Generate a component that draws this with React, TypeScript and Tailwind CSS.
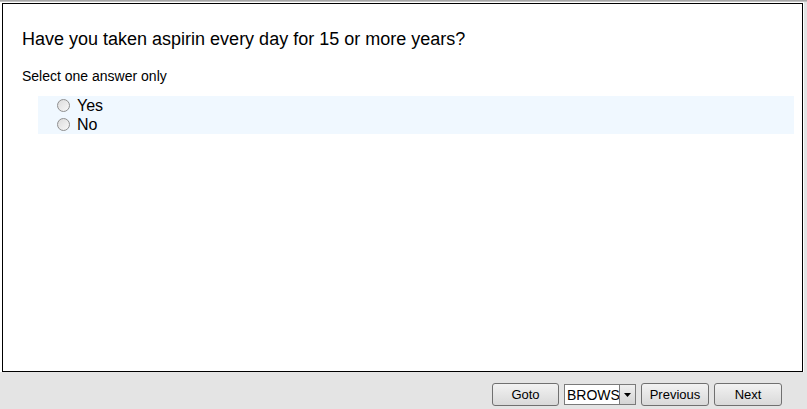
import React from "react";

function Btn({ label, w }: { label: string; w: string }) {
  return (
    <button
      className={`${w} h-[23px] rounded-[3px] border border-[#707070] bg-gradient-to-b from-[#f2f2f2] to-[#d9d9d9] text-[13px] text-black leading-none flex items-center justify-center`}
      style={{ fontFamily: '"Liberation Sans", Arial, sans-serif' }}
    >
      {label}
    </button>
  );
}

function Radio() {
  return (
    <span className="w-[13px] h-[13px] rounded-full border border-[#8f8f8f] bg-gradient-to-br from-[#dcdcdc] to-[#f8f8f8] inline-block shrink-0" />
  );
}

export default function App() {
  return (
    <div
      className="w-[807px] h-[409px] bg-[#e4e4e4] flex flex-col overflow-hidden"
      style={{ fontFamily: '"Liberation Sans", Arial, sans-serif' }}
    >
      <div className="h-[2px] bg-gradient-to-b from-[#9a9a9a] to-[#cfcfcf] shrink-0" />
      <div className="w-[804px] bg-white pl-[2px] pt-[1px] shrink-0">
        <div className="w-[801px] h-[369px] border border-black pt-[24px] pl-[19px] pr-[8px]">
          <div className="text-[18px] leading-[22px] text-black">
            Have you taken aspirin every day for 15 or more years?
          </div>
          <div className="mt-[18px] text-[14px] leading-[16px] text-black">Select one answer only</div>
          <div className="mt-[12px] ml-[16px] bg-[#f0f8ff] pl-[19px]">
            <div className="flex items-center gap-[7px] h-[19px] text-[16px] text-black">
              <Radio />
              <span>Yes</span>
            </div>
            <div className="flex items-center gap-[7px] h-[19px] text-[16px] text-black">
              <Radio />
              <span>No</span>
            </div>
          </div>
        </div>
      </div>
      <div className="flex items-center justify-end gap-[5px] pr-[25px] pt-[11px]">
        <Btn label="Goto" w="w-[67px]" />
        <div className="w-[72px] h-[21px] border border-[#7a7a7a] bg-white flex items-center">
          <span className="flex-1 overflow-hidden whitespace-nowrap text-[14px] leading-none pl-[2px] text-black">BROWS</span>
          <span className="w-[16px] h-[19px] border-l border-[#7a7a7a] bg-gradient-to-b from-[#f0f0f0] to-[#d4d4d4] flex items-center justify-center">
            <svg width="7" height="4" viewBox="0 0 7 4">
              <polygon points="0,0 7,0 3.5,4" fill="#000" />
            </svg>
          </span>
        </div>
        <Btn label="Previous" w="w-[68px]" />
        <Btn label="Next" w="w-[68px]" />
      </div>
    </div>
  );
}
